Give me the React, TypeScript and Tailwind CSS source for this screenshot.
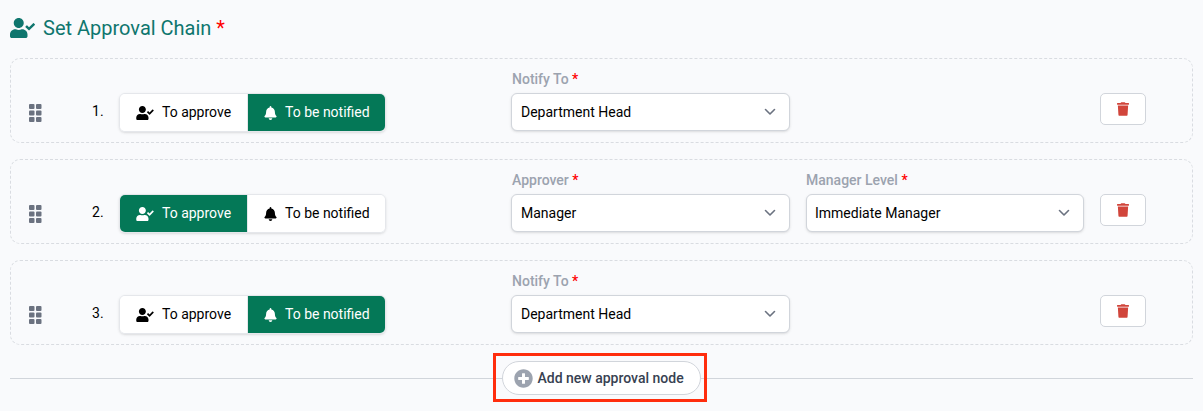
import { FaUserCheck, FaBell, FaTrash, FaPlusCircle } from "react-icons/fa";

function Grip() {
  return (
    <svg width="13" height="18" viewBox="0 0 13 18" fill="#6b7280">
      {[0, 7].map((x) =>
        [0, 6.5, 13].map((y) => <rect key={`${x}-${y}`} x={x} y={y} width="5.5" height="5" rx="1" />)
      )}
    </svg>
  );
}

function Chevron() {
  return (
    <svg width="12" height="8" viewBox="0 0 12 8" fill="none" stroke="#6b7280" strokeWidth="1.6" strokeLinecap="round" strokeLinejoin="round">
      <path d="M1.500 1.500 6 6l4.500-4.500" />
    </svg>
  );
}

function Field({ label, value, w, second }: { label: string; value: string; w: string; second?: boolean }) {
  return (
    <div className={`flex flex-col mb-[1px] ${w}`}>
      <div className={`text-[14px] leading-[20px] font-medium text-[#9ca3af] mb-[4px] ${second ? "" : "pl-[1px]"}`}>
        {label} <span className="text-[#ff0000]">*</span>
      </div>
      <div className={`h-[38px] bg-white border border-[#d1d5db] rounded-[6px] shadow-sm flex items-center justify-between pr-[13px] text-[14px] text-black ${second ? "pl-[8px]" : "pl-[9px]"}`}>
        <span>{value}</span>
        <Chevron />
      </div>
    </div>
  );
}

function Row({ n, approve }: { n: number; approve: boolean }) {
  const on = "bg-[#047857] text-white";
  const off = "bg-white text-black";
  return (
    <div className="h-[85px] border border-dashed border-[#d9dce1] rounded-[10px] flex items-end pb-[10px] pl-[18px]">
      <div className="h-[38px] flex items-center w-[63px] shrink-0">
        <Grip />
      </div>
      <div className="h-[38px] mb-[2px] flex items-center w-[27px] shrink-0 text-[14px] text-black">{n}.</div>
      <div className="h-[39px] w-[267px] shrink-0 flex rounded-[6px] border border-[#e5e7eb] shadow-sm overflow-hidden text-[14px]">
        <div className={`w-[128px] flex items-center pl-[16px] gap-[8px] border-r border-[#e5e7eb] ${approve ? on : off}`}>
          <FaUserCheck className="w-[18px] h-[14px]" />
          <span>To approve</span>
        </div>
        <div className={`flex-1 flex items-center pl-[16px] gap-[8px] ${approve ? off : on}`}>
          <FaBell className="w-[13px] h-[14px]" />
          <span>To be notified</span>
        </div>
      </div>
      <div className="ml-[125px] flex gap-[16px] w-[573px] shrink-0">
        {approve ? (
          <>
            <Field label="Approver" value="Manager" w="w-[279px]" />
            <Field label="Manager Level" value="Immediate Manager" w="w-[278px]" second />
          </>
        ) : (
          <Field label="Notify To" value="Department Head" w="w-[279px]" />
        )}
      </div>
      <div className="ml-[16px] h-[32px] w-[46px] mb-[7px] bg-white border border-[#d1d5db] rounded-[5px] flex items-center justify-center">
        <FaTrash className="w-[12px] h-[14px] text-[#d1453b]" />
      </div>
    </div>
  );
}

export default function App() {
  return (
    <div className="w-[1203px] h-[411px] overflow-hidden bg-[#f9fafc] px-[10px] pt-[15px] font-['Roboto',sans-serif]">
      <div className="flex items-center h-[26px] gap-[8px] text-[#0f766e] text-[20px] leading-[26px]">
        <FaUserCheck className="w-[25px] h-[20px]" />
        <span>
          Set Approval Chain <span className="text-[#ff0000]">*</span>
        </span>
      </div>
      <div className="mt-[17px] flex flex-col gap-[16px]">
        <Row n={1} approve={false} />
        <Row n={2} approve={true} />
        <Row n={3} approve={false} />
      </div>
      <div className="relative mt-[15px] h-[36px] flex items-center justify-center">
        <div className="flex-1 h-px bg-[#d1d5db]" />
        <div className="h-[34px] w-[199px] ml-[-1px] shrink-0 bg-white border border-[#d1d5db] rounded-full flex items-center pl-[11px] gap-[5px] text-[14px] font-medium text-[#374151]">
          <FaPlusCircle className="w-[19px] h-[19px] text-[#9ca3af]" />
          <span>Add new approval node</span>
        </div>
        <div className="flex-1 h-px bg-[#d1d5db]" />
        <div className="absolute left-[483px] top-[-7px] w-[214px] h-[49px] border-[3px] border-[#ff2d0d]" />
      </div>
    </div>
  );
}
